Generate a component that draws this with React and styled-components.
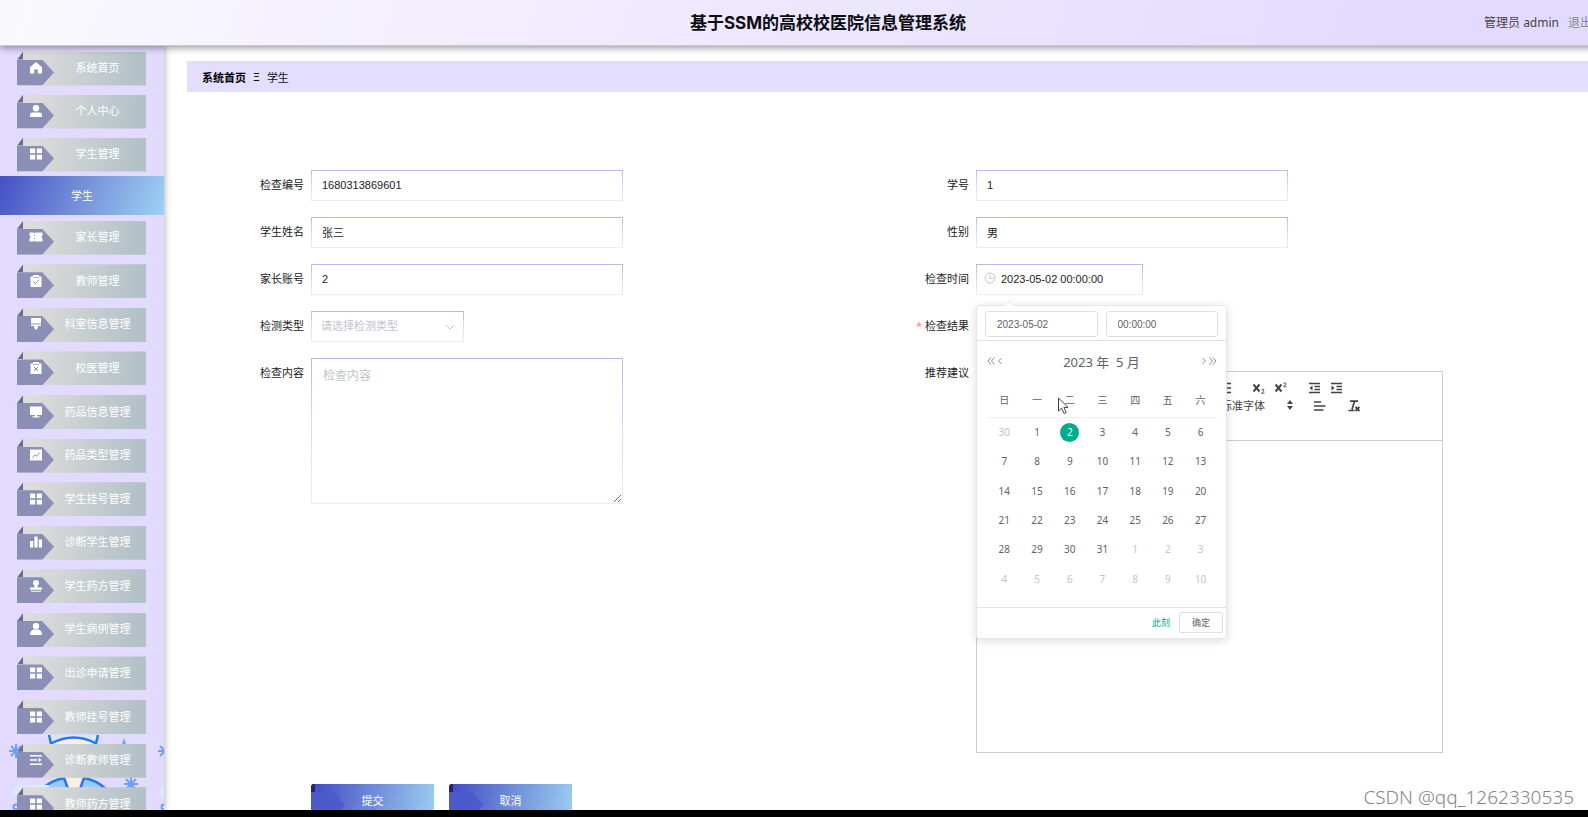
import React from "react";
import styled, { createGlobalStyle, css } from "styled-components";

const cjk = `"Noto Sans", "Noto Sans CJK SC", sans-serif`;
const arial = `"Liberation Sans", "Noto Sans CJK SC", sans-serif`;

const Global = createGlobalStyle`
  *, *::before, *::after { box-sizing: border-box; }
  body { margin: 0; background: #000; font-family: ${cjk}; font-size: 11px; color: #222; }
  button, input, select, textarea { margin: 0; font: inherit; color: inherit; outline: none; }
  button { border: 0; padding: 0; background: none; cursor: pointer; }
  a { color: inherit; text-decoration: none; }
`;

const Frame = styled.div`
  position: relative;
  height: 100vh;
  padding-bottom: 7px;
  overflow: hidden;
  background: #000;
`;

const Page = styled.div`
  width: calc(100% + 68px);
  height: 100%;
  display: flex;
  flex-direction: column;
  overflow: hidden;
  background: #fff;
`;

const Header = styled.header`
  position: relative;
  z-index: 3;
  flex: none;
  height: 46px;
  display: grid;
  grid-template-columns: 1fr auto 1fr;
  align-items: center;
  border-bottom: 1px solid #cbc8d4;
  background: linear-gradient(110deg, #f9f9fd 0%, #f3effe 25%, #e3dbff 85%);
  box-shadow: 0 2px 7px rgba(0, 0, 0, 0.4);
`;

const Title = styled.h1`
  grid-column: 2;
  margin: 0;
  font-family: Inter, "Noto Sans CJK SC", sans-serif;
  font-size: 17px;
  line-height: 24px;
  font-weight: 700;
  color: #0b0b12;
`;

const UserBar = styled.div`
  justify-self: end;
  display: flex;
  gap: 9px;
  padding-right: 40px;
  font-size: 12px;
  line-height: 18px;
  color: #444;
`;

const Logout = styled.a`
  color: #888;
`;

const Body = styled.div`
  flex: 1;
  min-height: 0;
  display: flex;
`;

const Sidebar = styled.nav`
  position: relative;
  z-index: 2;
  flex: none;
  width: 164px;
  overflow: visible;
  background: #e3dbff;
  box-shadow: 1px 0 6px rgba(0, 0, 0, 0.3);
`;

const Scene = styled.svg`
  position: absolute;
  left: 0;
  bottom: 0;
`;

const MenuGroup = styled.ul`
  position: relative;
  list-style: none;
  margin: 0;
  padding: 1px 18px 0 17px;
  height: ${(p) => p.$height}px;
  display: grid;
  grid-auto-rows: 1fr;
  align-items: center;
`;

const ribbon = css`
  &::before,
  &::after {
    content: "";
    position: absolute;
    left: 0;
  }
  &::before {
    top: 0;
    width: 6px;
    height: 8px;
    background: ${(p) => p.$fold};
    clip-path: polygon(100% 0, 100% 100%, 0 100%);
  }
  &::after {
    top: 8px;
    bottom: 0;
    width: ${(p) => p.$tagWidth}px;
    background: ${(p) => p.$tag};
    clip-path: polygon(0 0, 68% 0, 100% 50%, 68% 100%, 0 100%);
  }
`;

const MenuLink = styled.a.attrs({ $fold: "#6b6a90", $tag: "#8b8fb5", $tagWidth: 37 })`
  position: relative;
  display: grid;
  grid-template-columns: 38px 1fr;
  align-items: center;
  height: 34px;
  padding-bottom: 1px;
  color: #fff;
  line-height: 16px;
  background: linear-gradient(100deg, #dcdcdc 12%, #cfd3d4 40%, #b4c2c8 90%);
  clip-path: polygon(6px 0, 100% 0, 100% 100%, 0 100%, 0 8px);
  ${ribbon}
`;

const MenuIcon = styled.svg`
  position: relative;
  z-index: 1;
  justify-self: center;
  fill: #fff;
`;

const MenuText = styled.span`
  padding-right: 6px;
  text-align: center;
`;

const ActiveLink = styled.a`
  position: relative;
  display: block;
  height: 39px;
  line-height: 39px;
  text-align: center;
  color: #fff;
  background: linear-gradient(110deg, #4650c6, #7691da 50%, #9cd2f4);
`;

const Main = styled.main`
  flex: 1;
  min-width: 0;
  padding: 15px 0 0 23px;
`;

const Crumbs = styled.nav`
  display: flex;
  align-items: center;
  gap: 7px;
  height: 31px;
  padding-left: 15px;
  color: #111;
  background: #e3ddfe;
`;

const CrumbHome = styled.a`
  font-weight: 700;
  color: #000;
`;

const Form = styled.form`
  display: grid;
  grid-template-columns: 1fr 1fr;
  padding: 78px 119px 0 20px;
`;

const Column = styled.div`
  display: flex;
  flex-direction: column;
  gap: 16px;
`;

const Field = styled.div`
  display: grid;
  grid-template-columns: 97px 1fr;
  column-gap: 7px;
  align-items: start;
`;

const Label = styled.label`
  line-height: 30px;
  text-align: right;
  color: #222;
`;

const Required = styled.span`
  color: #f78989;
`;

const line = css`
  border: 1px solid;
  border-image: linear-gradient(to bottom, #b3baea, #d9dcf8 50%, #eeeeee) 1;
  background: #fff;
`;

const TextInput = styled.input`
  ${line}
  width: ${(p) => p.$width || 312}px;
  height: 31px;
  padding: 0 ${(p) => p.$pad || 10}px 2px;
  font-family: ${arial};
`;

const TextArea = styled.textarea`
  ${line}
  display: block;
  width: 312px;
  height: 146px;
  padding: 8px 11px;
  font-size: 12px;
  line-height: 18px;
  resize: both;
  &::placeholder { color: #c0c4cc; }
`;

const Holder = styled.div`
  position: relative;
  width: ${(p) => p.$width}px;
`;

const Select = styled.select`
  ${line}
  appearance: none;
  display: block;
  width: 100%;
  height: 31px;
  padding: 0 9px 2px;
  color: #c0c4cc;
`;

const Adorn = styled.svg`
  position: absolute;
  top: 8px;
  ${(p) => (p.$end ? "right: 8px;" : "left: 8px;")}
  fill: none;
  stroke: #c0c4cc;
  pointer-events: none;
`;

const Popup = styled.div`
  position: absolute;
  z-index: 5;
  top: 41px;
  left: 0;
  width: 251px;
  border: 1px solid #e4e7ed;
  border-radius: 3px;
  background: #fff;
  color: #606266;
  font-size: 10px;
  box-shadow: 0 2px 10px rgba(0, 0, 0, 0.14);
  &::before {
    content: "";
    position: absolute;
    top: -4px;
    left: 29px;
    width: 7px;
    height: 7px;
    background: #fff;
    border: solid #e4e7ed;
    border-width: 1px 0 0 1px;
    transform: rotate(45deg);
  }
`;

const PopupTop = styled.div`
  display: grid;
  grid-template-columns: 1fr 1fr;
  gap: 8px;
  padding: 5px 8px 3px;
  border-bottom: 1px solid #e0e2e6;
`;

const SmallInput = styled.input`
  width: 100%;
  height: 26px;
  padding: 0 11px;
  border: 1px solid #dcdfe6;
  border-radius: 3px;
  font-family: ${arial};
`;

const MonthBar = styled.div`
  display: grid;
  grid-template-columns: auto auto 1fr auto auto;
  align-items: center;
  height: 42px;
  padding: 0 9px;
`;

const MonthName = styled.span`
  font-size: 13px;
  line-height: 18px;
  text-align: center;
  white-space: pre;
`;

const Arrow = styled.button`
  display: flex;
  align-items: center;
  justify-content: center;
  width: 9px;
  height: 14px;
  padding-bottom: 2px;
  svg { fill: none; stroke: #8a8d93; }
`;

const Days = styled.table`
  width: 229px;
  height: 211px;
  margin: 0 9px 13px 11px;
  table-layout: fixed;
  border-collapse: collapse;
  text-align: center;
`;

const WeekDay = styled.th`
  height: 34px;
  padding: 0;
  font-weight: 400;
  border-bottom: 1px solid #ebeef5;
`;

const Day = styled.td`
  padding: 0;
  color: ${(p) => (p.$muted ? "#c0c4cc" : "#606266")};
`;

const DayButton = styled.button`
  width: 19px;
  height: 19px;
  line-height: 19px;
  border-radius: 50%;
  ${(p) => p.$on && "background: #00ab8e; color: #fff;"}
`;

const PopupFoot = styled.div`
  display: flex;
  justify-content: flex-end;
  align-items: center;
  gap: 9px;
  height: 31px;
  padding: 0 3px 1px 0;
  border-top: 1px solid #e4e4e8;
`;

const NowButton = styled.button`
  color: #00ab8e;
  font-size: 9px;
`;

const OkButton = styled.button`
  width: 44px;
  height: 21px;
  border: 1px solid #dcdfe6;
  border-radius: 2px;
  font-size: 9px;
`;

const Editor = styled.div`
  width: 467px;
  height: 382px;
  margin-top: 13px;
  border: 1px solid #ccc;
`;

const Tools = styled.div`
  height: 69px;
  padding: 7px 3px;
  border-bottom: 1px solid #ccc;
`;

const ToolRow = styled.div`
  display: flex;
  gap: 12px;
  height: 18px;
`;

const ToolGroup = styled.div`
  display: flex;
`;

const Tool = styled.button`
  width: 22px;
  height: 18px;
  display: flex;
  align-items: center;
  justify-content: center;
  color: #444;
  svg { fill: none; stroke: currentColor; }
`;

const Picker = styled.button`
  display: flex;
  align-items: center;
  justify-content: space-between;
  width: ${(p) => p.$width}px;
  padding: 0 4px 2px 8px;
  color: #444;
  svg { fill: currentColor; }
`;

const Actions = styled.div`
  grid-column: 1 / -1;
  display: flex;
  gap: 15px;
  padding: 31px 0 0 104px;
`;

const ActionButton = styled.button.attrs({ $fold: "#25275a", $tag: "#4c5acb", $tagWidth: 34 })`
  position: relative;
  width: 123px;
  height: 34px;
  padding-bottom: 2px;
  color: #fff;
  border-radius: 3px 0 0 0;
  overflow: hidden;
  background: linear-gradient(100deg, #464fc6 5%, #6f8cd9 50%, #9acef1);
  ${ribbon}
  &::before {
    width: 4px;
    clip-path: none;
  }
`;

const Watermark = styled.div`
  position: absolute;
  z-index: 6;
  right: 14px;
  bottom: 7px;
  font-size: 19px;
  line-height: 26px;
  font-weight: 300;
  color: #858589;
`;

const Pointer = styled.svg`
  position: absolute;
  z-index: 7;
  top: 91px;
  left: 80px;
`;

const icons = {
  home: <path d="M6 0 12 5.2V11.5H7.8V7.5H4.2V11.5H0V5.2Z" />,
  person: <><circle cx="6" cy="3.2" r="3.2" /><path d="M0 12V10Q0 7.6 2.5 7.6H9.5Q12 7.6 12 10V12Z" /></>,
  grid: <path d="M0 .5H5.2V5.2H0ZM6.8.5H12V5.2H6.8ZM0 6.8H5.2V11.5H0ZM6.8 6.8H12V11.5H6.8Z" />,
  ticket: <path fillRule="evenodd" d="M-.5 1.5H3.8L4.5 2.4 5.2 1.5H12.5V4.2Q10.6 6 12.5 7.8V10.5H5.2L4.5 9.6 3.8 10.5H-.5V7.8Q1.4 6 -.5 4.2ZM4.1 4V5H4.9V4ZM4.1 7V8H4.9V7Z" />,
  check: <><path d="M.5 1.5H3V0H9V1.5H11.5V12H.5Z" /><path d="M3 6.5 5.3 8.7 9.2 4.6" fill="none" stroke="#8b8fb5" /><path d="M3 2.5H9" stroke="#8b8fb5" strokeWidth=".7" /></>,
  brush: <path d="M1 0H11V5.5H1ZM1 6.5H11V8H7.8V10L6 12 4.2 10V8H1Z" />,
  cross: <><path d="M.5 1.5H3V0H9V1.5H11.5V12H.5Z" /><path d="M4 5 8 9M8 5 4 9" fill="none" stroke="#8b8fb5" /><path d="M3 2.5H9" stroke="#8b8fb5" strokeWidth=".7" /></>,
  monitor: <path d="M0 .5H12V9H0ZM5 9H7V10.3H9.5V11.5H2.5V10.3H5Z" />,
  trend: <><path d="M0 .5H12V11.5H0Z" /><path d="M2.5 8.5 5 6 6.8 7.2 9.5 3.8" fill="none" stroke="#8b8fb5" /></>,
  bars: <path d="M0 5H3.2V11.5H0ZM4.4.5H7.6V11.5H4.4ZM8.8 3.5H12V11.5H8.8Z" />,
  stamp: <path d="M6 0A3 3 0 0 1 9 3Q9 4.5 7.6 5.5V7.5H12V9.8H0V7.5H4.4V5.5Q3 4.5 3 3A3 3 0 0 1 6 0ZM1 10.8H11V11.8H1Z" />,
  user: <><circle cx="6" cy="3" r="3.2" /><path d="M0 12Q0 7 4 6.5H8Q12 7 12 12Z" /></>,
  list: <path d="M0 1H12V2.5H0ZM0 5.2H7V6.7H0ZM8.5 3.8 11.5 6 8.5 8.2ZM0 9.5H12V11H0Z" />,
};

const top = [
  ["home", "系统首页"],
  ["person", "个人中心"],
  ["grid", "学生管理"],
];

const rest = [
  ["ticket", "家长管理"],
  ["check", "教师管理"],
  ["brush", "科室信息管理"],
  ["cross", "校医管理"],
  ["monitor", "药品信息管理"],
  ["trend", "药品类型管理"],
  ["grid", "学生挂号管理"],
  ["bars", "诊断学生管理"],
  ["stamp", "学生药方管理"],
  ["user", "学生病例管理"],
  ["grid", "出诊申请管理"],
  ["grid", "教师挂号管理"],
  ["list", "诊断教师管理"],
  ["grid", "教师药方管理"],
];

function Menu({ items, height }) {
  return (
    <MenuGroup $height={height}>
      {items.map(([icon, text]) => (
        <li key={text}>
          <MenuLink href="#">
            <MenuIcon width="14" height="12" viewBox="-1 0 14 12">{icons[icon]}</MenuIcon>
            <MenuText>{text}</MenuText>
          </MenuLink>
        </li>
      ))}
    </MenuGroup>
  );
}

const star = "M-7 0H7M0-7V7M-5-5 5 5M-5 5 5-5";

function DoctorScene() {
  return (
    <Scene width="164" height="78" viewBox="0 732 164 78" aria-hidden="true">
      <path d="M50 744Q74 733 97 744L94 775H53Z" fill="#fdeee8" />
      <path d="M49 735 51 743.5Q74 731.5 96 743.5L98 735Z" fill="#d3ebff" />
      <path d="M54 735H92V738Q74 732 56 739Z" fill="#e3dbff" />
      <path d="M49 735 51 743.5Q74 731.5 96 743.5L98 735" fill="none" stroke="#2478f0" strokeWidth="2.5" />
      <path d="M42 789Q52 780 64 778L74 806 84 778Q96 780 106 789V810H42Z" fill="#9acbff" stroke="#2478f0" strokeWidth="2.5" />
      <path d="M66 778H82L74 800Z" fill="#fdeee8" />
      <g fill="none" stroke="#6f9ff5" strokeWidth="2">
        <path d={star} transform="translate(16 751)" />
        <path d={star} transform="translate(165 751)" />
        <path d={star} transform="translate(131 784)" />
        <circle cx="16" cy="807" r="2.5" />
        <circle cx="164" cy="807" r="2.5" />
      </g>
      <path d="M124 738 126 744 131 746 124 750 117 746 122 744Z" fill="#6f9ff5" />
      <circle cx="19" cy="791" r="6" fill="#dbeaff" />
      <rect x="19" y="785" width="30" height="12" fill="#dbeaff" />
      <circle cx="166" cy="791" r="6" fill="#dbeaff" />
    </Scene>
  );
}

const weeks = [
  [30, 1, 2, 3, 4, 5, 6],
  [7, 8, 9, 10, 11, 12, 13],
  [14, 15, 16, 17, 18, 19, 20],
  [21, 22, 23, 24, 25, 26, 27],
  [28, 29, 30, 31, 1, 2, 3],
  [4, 5, 6, 7, 8, 9, 10],
];

const isOther = (w, d) => (w === 0 && d > 20) || (w > 3 && d < 20);

function ArrowIcon({ d, label }) {
  return (
    <Arrow type="button" aria-label={label}>
      <svg width="8" height="8" viewBox="0 0 8 8"><path d={d} /></svg>
    </Arrow>
  );
}

function DatePopup() {
  return (
    <Popup>
      <PopupTop>
        <SmallInput aria-label="日期" defaultValue="2023-05-02" />
        <SmallInput aria-label="时间" defaultValue="00:00:00" />
      </PopupTop>
      <MonthBar>
        <ArrowIcon label="上一年" d="M4 .5 1 4 4 7.5M7.5.5 4.5 4 7.5 7.5" />
        <ArrowIcon label="上个月" d="M5.5 1 2.5 4 5.5 7" />
        <MonthName>{"2023 年  5 月"}</MonthName>
        <ArrowIcon label="下个月" d="M2.5 1 5.5 4 2.5 7" />
        <ArrowIcon label="下一年" d="M.5.5 3.5 4 .5 7.5M4 .5 7 4 4 7.5" />
      </MonthBar>
      <Days>
        <thead>
          <tr>{[..."日一二三四五六"].map((d) => <WeekDay key={d} scope="col">{d}</WeekDay>)}</tr>
        </thead>
        <tbody>
          {weeks.map((week, w) => (
            <tr key={w}>
              {week.map((d) => (
                <Day key={d} $muted={isOther(w, d)}>
                  <DayButton type="button" $on={w === 0 && d === 2}>{d}</DayButton>
                </Day>
              ))}
            </tr>
          ))}
        </tbody>
      </Days>
      <PopupFoot>
        <NowButton type="button">此刻</NowButton>
        <OkButton type="button">确定</OkButton>
      </PopupFoot>
      <Pointer width="14" height="18" viewBox="0 0 14 18">
        <path d="M1.5 1V14L4.6 11.2 7 16.5 9.2 15.5 6.9 10.4H11Z" fill="#fff" stroke="#444" />
      </Pointer>
    </Popup>
  );
}

function ToolButton({ label, children }) {
  return (
    <Tool type="button" aria-label={label}>
      <svg width="12" height="12" viewBox="0 0 12 12">{children}</svg>
    </Tool>
  );
}

function ToolPicker({ width, label, children }) {
  return (
    <Picker type="button" $width={width} aria-label={label}>
      <span>{children}</span>
      <svg width="6" height="10" viewBox="0 0 6 10"><path d="M3 0 6 4H0ZM3 10 6 6H0Z" /></svg>
    </Picker>
  );
}

function RichEditor() {
  return (
    <Editor>
      <Tools>
        <ToolRow>
          <ToolGroup>
            <ToolButton label="加粗"><path d="M3 1.5H7A2 2 0 0 1 7 6H3ZM3 6H8A2 2 0 0 1 8 10.5H3Z" strokeWidth="1.5" /></ToolButton>
            <ToolButton label="斜体"><path d="M5 1.5H9M3 10.5H7M7 1.5 5 10.5" /></ToolButton>
            <ToolButton label="下划线"><path d="M3 1V6A3 3 0 0 0 9 6V1M2 11.5H10" /></ToolButton>
            <ToolButton label="删除线"><path d="M1 6H11M9 3Q6 0 4 3T8 7 3 9" /></ToolButton>
          </ToolGroup>
          <ToolGroup>
            <ToolButton label="引用"><path d="M2 3H5V6L3 9M7 3H10V6L8 9" /></ToolButton>
            <ToolButton label="代码"><path d="M4 3 1 6 4 9M8 3 11 6 8 9" /></ToolButton>
          </ToolGroup>
          <ToolGroup>
            <ToolButton label="标题一"><path d="M1 2V10M6 2V10M1 6H6M10 3V10" /></ToolButton>
            <ToolButton label="标题二"><path d="M1 2V10M6 2V10M1 6H6M8 4H11L8 10H11" /></ToolButton>
          </ToolGroup>
          <ToolGroup>
            <ToolButton label="有序列表"><path d="M5 2H12M5 6H12M5 10H12M2 1V4M1 8H3" /></ToolButton>
            <ToolButton label="无序列表"><path d="M4 1.5H12M4 6H12M4 10.5H12M0 1.5H2M0 6H2M0 10.5H2" strokeWidth="1.5" /></ToolButton>
          </ToolGroup>
          <ToolGroup>
            <ToolButton label="下标"><path d="M.5 2.5 6.5 9.5M6.5 2.5.5 9.5" strokeWidth="2" /><path d="M8.5 8Q10 6.5 11 8 11 9 8.7 11.2H11.5" strokeWidth=".9" /></ToolButton>
            <ToolButton label="上标"><path d="M.5 2.5 6.5 9.5M6.5 2.5.5 9.5" strokeWidth="2" /><path d="M8.5 1.5Q10 0 11 1.5 11 2.5 8.7 4.7H11.5" strokeWidth=".9" /></ToolButton>
          </ToolGroup>
          <ToolGroup>
            <ToolButton label="减少缩进"><path d="M0 1.5H11M5.5 4.5H11M5.5 7.5H11M0 10.5H11" strokeWidth="1.5" /><path d="M3.5 3.5V8.5L.5 6Z" fill="currentColor" stroke="none" /></ToolButton>
            <ToolButton label="增加缩进"><path d="M0 1.5H11M5.5 4.5H11M5.5 7.5H11M0 10.5H11" strokeWidth="1.5" /><path d="M.5 3.5V8.5L3.5 6Z" fill="currentColor" stroke="none" /></ToolButton>
          </ToolGroup>
        </ToolRow>
        <ToolRow>
          <ToolPicker width={75} label="字号" />
          <ToolPicker width={78} label="标题" />
          <ToolGroup>
            <ToolButton label="文字颜色"><path d="M2 9 6 1 10 9M3.5 6H8.5M1 11.5H11" /></ToolButton>
            <ToolButton label="背景颜色"><path d="M1 1H11V11H1ZM3 9 6 3 9 9" /></ToolButton>
          </ToolGroup>
          <ToolPicker width={84}>标准字体</ToolPicker>
          <ToolButton label="对齐"><path d="M0 2H7M0 6H11.5M0 10H9.5" strokeWidth="1.7" /></ToolButton>
          <ToolButton label="清除格式"><path d="M2 1.2H10M6.5 1.2 4 9.5M.5 10.5H6.5" strokeWidth="1.7" /><path d="M7.5 7 11.5 11M11.5 7 7.5 11" strokeWidth="1.9" /></ToolButton>
        </ToolRow>
      </Tools>
    </Editor>
  );
}

function TextField({ id, label, value }) {
  return (
    <Field>
      <Label htmlFor={id}>{label}</Label>
      <TextInput id={id} defaultValue={value} />
    </Field>
  );
}

function ChoiceField({ id, label, hint, required }) {
  return (
    <Field>
      <Label htmlFor={id}>{required && <Required>* </Required>}{label}</Label>
      <Holder $width={153}>
        <Select id={id}><option>{hint}</option></Select>
        <Adorn $end width="12" height="14" viewBox="0 0 12 14"><path d="M2 6 6 10 10 6" /></Adorn>
      </Holder>
    </Field>
  );
}

export default function App() {
  return (
    <Frame>
      <Global />
      <Page>
        <Header>
          <Title>基于SSM的高校校医院信息管理系统</Title>
          <UserBar>
            <span>管理员 admin</span>
            <Logout href="#">退出登录</Logout>
          </UserBar>
        </Header>
        <Body>
          <Sidebar>
            <DoctorScene />
            <Menu items={top} height={130} />
            <ActiveLink href="#">学生</ActiveLink>
            <Menu items={rest} height={611} />
          </Sidebar>
          <Main>
            <Crumbs>
              <CrumbHome href="#">系统首页</CrumbHome>
              <span>Ξ</span>
              <span>学生</span>
            </Crumbs>
            <Form onSubmit={(e) => e.preventDefault()}>
              <Column>
                <TextField id="code" label="检查编号" value="1680313869601" />
                <TextField id="name" label="学生姓名" value="张三" />
                <TextField id="parent" label="家长账号" value="2" />
                <ChoiceField id="kind" label="检测类型" hint="请选择检测类型" />
                <Field>
                  <Label htmlFor="content">检查内容</Label>
                  <TextArea id="content" placeholder="检查内容" />
                </Field>
              </Column>
              <Column>
                <TextField id="number" label="学号" value="1" />
                <TextField id="sex" label="性别" value="男" />
                <Field>
                  <Label htmlFor="time">检查时间</Label>
                  <Holder $width={167}>
                    <TextInput id="time" $width={167} $pad={24} defaultValue="2023-05-02 00:00:00" />
                    <Adorn width="12" height="12" viewBox="0 0 12 12"><circle cx="6" cy="6" r="5" /><path d="M6 3V6.5H9" /></Adorn>
                    <DatePopup />
                  </Holder>
                </Field>
                <ChoiceField id="result" label="检查结果" hint="" required />
                <Field>
                  <Label as="span">推荐建议</Label>
                  <RichEditor />
                </Field>
              </Column>
              <Actions>
                <ActionButton type="submit">提交</ActionButton>
                <ActionButton type="button">取消</ActionButton>
              </Actions>
            </Form>
          </Main>
        </Body>
      </Page>
      <Watermark>CSDN @qq_1262330535</Watermark>
    </Frame>
  );
}
